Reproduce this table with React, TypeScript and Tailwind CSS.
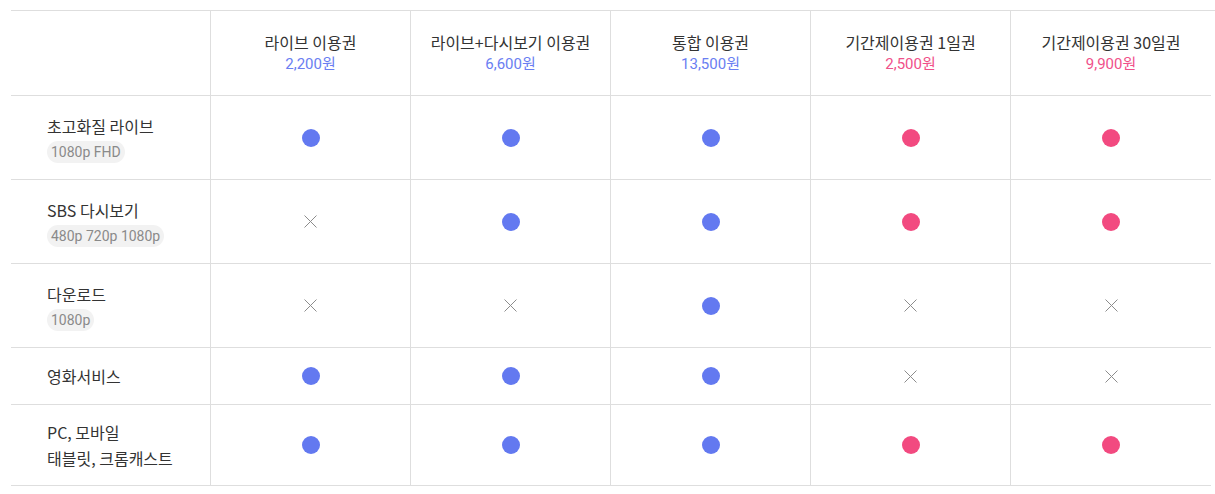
const plans = [
  { name: "라이브 이용권", price: "2,200원", tone: "blue" },
  { name: "라이브+다시보기 이용권", price: "6,600원", tone: "blue" },
  { name: "통합 이용권", price: "13,500원", tone: "blue" },
  { name: "기간제이용권 1일권", price: "2,500원", tone: "pink" },
  { name: "기간제이용권 30일권", price: "9,900원", tone: "pink" },
];

const features = [
  { title: ["초고화질 라이브"], tag: "1080p FHD", h: "h-[84px]", has: [1, 1, 1, 1, 1] },
  { title: ["SBS 다시보기"], tag: "480p 720p 1080p", h: "h-[84px]", has: [0, 1, 1, 1, 1] },
  { title: ["다운로드"], tag: "1080p", h: "h-[84px]", has: [0, 0, 1, 0, 0] },
  { title: ["영화서비스"], tag: "", h: "h-[57px]", has: [1, 1, 1, 0, 0] },
  { title: ["PC, 모바일", "태블릿, 크롬캐스트"], tag: "", h: "h-[81px]", has: [1, 1, 1, 1, 1] },
];

const kr = { fontFamily: '"Noto Sans CJK KR", "Noto Sans", sans-serif' };
const num = { fontFamily: 'Roboto, "Noto Sans CJK KR", sans-serif' };

function Mark({ on, tone }: { on: boolean; tone: string }) {
  if (!on) {
    return (
      <svg width="13" height="13" viewBox="0 0 13 13" className="text-[#8c8c8c]">
        <path d="M0.5 0.5L12.5 12.5M12.5 0.5L0.5 12.5" stroke="currentColor" strokeWidth="1" />
      </svg>
    );
  }
  return (
    <span
      className={
        "block w-[18px] h-[18px] rounded-full " +
        (tone === "blue" ? "bg-[#6379f0]" : "bg-[#f24a80]")
      }
    />
  );
}

export default function App() {
  return (
    <div className="bg-white w-[1215px] h-[494px] pt-[10px] pl-[11px]">
      <div className="grid grid-cols-[199px_200px_200px_200px_200px_201px] border-t border-[#dedede] text-[#333]">
        {/* header row */}
        <div className="h-[85px] border-b border-[#dedede]" />
        {plans.map((p) => (
          <div
            key={p.name}
            className="h-[85px] border-b border-l border-[#dedede] flex flex-col items-center justify-center"
          >
            <span className="text-[16px] leading-[22px]" style={kr}>
              {p.name}
            </span>
            <span
              className={
                "text-[15px] leading-[22px] " +
                (p.tone === "blue" ? "text-[#6a7ef2]" : "text-[#f0508a]")
              }
              style={num}
            >
              {p.price}
            </span>
          </div>
        ))}

        {/* feature rows */}
        {features.map((f) => (
          <div key={f.title[0]} className="contents">
            <div className={f.h + " border-b border-[#dedede] flex flex-col justify-center pl-[36px]"}>
              {f.title.map((t) => (
                <span key={t} className="text-[16px] leading-[26px]" style={kr}>
                  {t}
                </span>
              ))}
              {f.tag && (
                <span
                  className="self-start mt-[2px] h-[22px] px-[4px] rounded-full bg-[#f2f2f2] text-[#8a8a8a] text-[14px] leading-[22px]"
                  style={num}
                >
                  {f.tag}
                </span>
              )}
            </div>
            {f.has.map((v, i) => (
              <div
                key={i}
                className={f.h + " border-b border-l border-[#dedede] flex items-center justify-center"}
              >
                <Mark on={v === 1} tone={plans[i].tone} />
              </div>
            ))}
          </div>
        ))}
      </div>
    </div>
  );
}
